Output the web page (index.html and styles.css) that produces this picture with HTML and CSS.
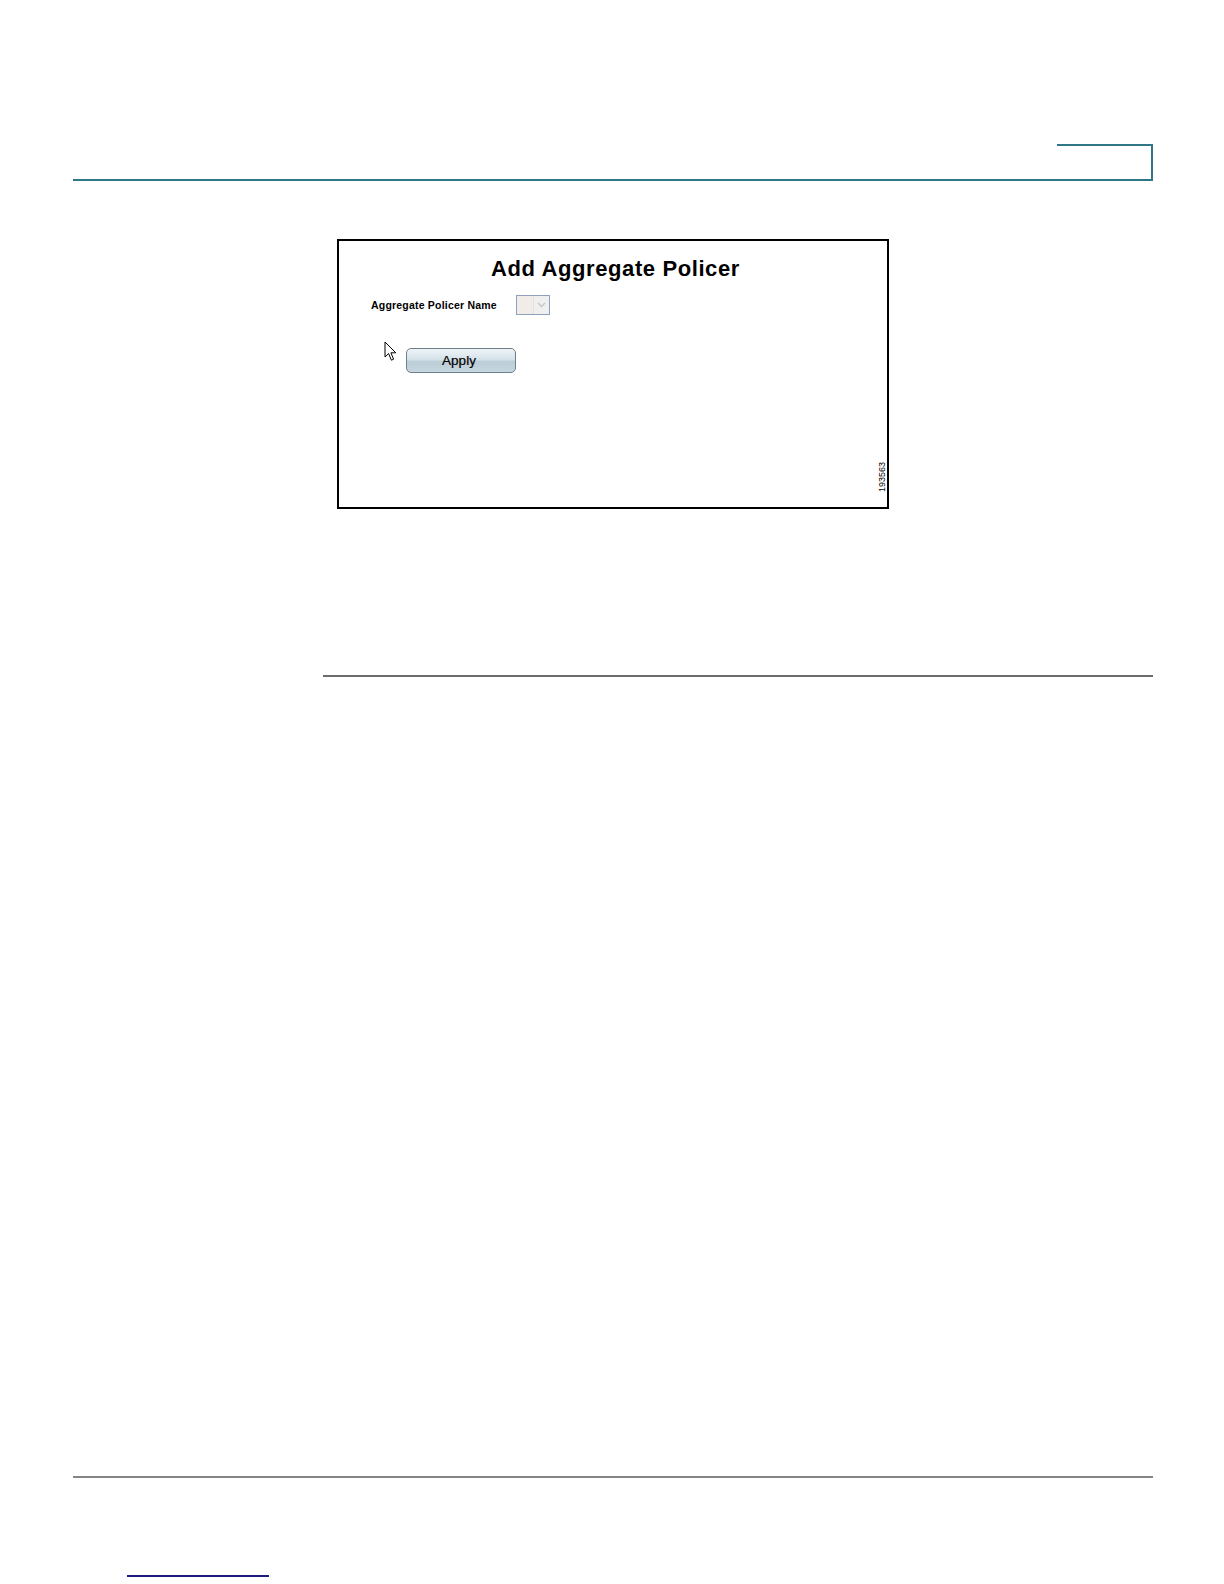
FILE: index.html
```html
<!DOCTYPE html>
<html lang="en">
<head>
<meta charset="utf-8">
<title>Add Aggregate Policer</title>
<link rel="stylesheet" href="styles.css">
</head>
<body>
<div class="page">
  <header class="header">
    <div class="tab"></div>
  </header>

  <figure class="figure">
    <h1 class="title">Add Aggregate Policer</h1>
    <div class="field-row">
      <span class="label">Aggregate Policer Name</span>
      <span class="select">
        <span class="select-value"></span>
        <span class="select-arrow">
          <svg width="9" height="6" viewBox="0 0 9 6"><path d="M1 1 L4.5 4.5 L8 1" fill="none" stroke="#c4c4c4" stroke-width="1.3"/></svg>
        </span>
      </span>
    </div>
    <div class="button-row">
      <svg class="cursor" width="13" height="21" viewBox="0 0 13 21">
        <path d="M1 1 L1 16 L4.6 12.6 L7.4 19.2 L9.6 18.2 L6.9 11.8 L11.8 11.8 Z" fill="#fff" stroke="#000" stroke-width="1" stroke-linejoin="miter"/>
      </svg>
      <button class="apply" type="button">Apply</button>
    </div>
    <span class="fig-id">193563</span>
  </figure>

  <hr class="rule">
  <hr class="footer-rule">
  <div class="link-line"></div>
</div>
</body>
</html>
```

FILE: styles.css
```css
html, body {
  margin: 0;
  padding: 0;
  background: #ffffff;
}

body {
  font-family: "Liberation Sans", Arial, sans-serif;
  color: #000;
}

.page {
  width: 1224px;
  height: 1584px;
  overflow: hidden;
}

.header {
  margin: 144px 0 0 73px;
  width: 1080px;
  display: flex;
  justify-content: flex-end;
  border-bottom: 2px solid #2f7787;
}

.tab {
  width: 94px;
  height: 33px;
  border-top: 2px solid #2f7787;
  border-right: 2px solid #2f7787;
}

.figure {
  position: relative;
  box-sizing: border-box;
  margin: 58px 0 0 337px;
  width: 552px;
  height: 270px;
  border: 2px solid #000;
  padding: 15px 0 0 0;
}

.title {
  margin: 0;
  padding-left: 5px;
  text-align: center;
  font-size: 22px;
  line-height: 26px;
  font-weight: bold;
  letter-spacing: 0.6px;
}

.field-row {
  display: flex;
  align-items: center;
  gap: 19px;
  margin-top: 13px;
  padding-left: 32px;
  height: 20px;
}

.label {
  font-size: 10.5px;
  font-weight: bold;
  letter-spacing: 0.2px;
}

.select {
  display: flex;
  box-sizing: border-box;
  width: 34px;
  height: 20px;
  border: 1px solid #8f9fbd;
  background: #fff;
}

.select-value {
  flex: 1;
  background: #f1ece8;
}

.select-arrow {
  width: 15px;
  display: flex;
  align-items: center;
  justify-content: center;
  background: #efefef;
  border-left: 1px solid #e2e2e2;
}

.button-row {
  display: flex;
  align-items: flex-start;
  margin-top: 26px;
  padding-left: 45px;
}

.cursor {
  display: block;
}

.apply {
  margin: 7px 0 0 9px;
  box-sizing: border-box;
  width: 110px;
  height: 25px;
  padding: 0;
  border: 1px solid #6f7f8a;
  border-radius: 5px;
  background: linear-gradient(to bottom, #eef4f7 0%, #d6e3ea 45%, #bccdd7 55%, #c6d6df 100%);
  font-family: "Liberation Sans", Arial, sans-serif;
  font-size: 13.5px;
  color: #000;
  text-align: center;
  line-height: 21px;
  text-indent: -4px;
  -webkit-text-stroke: 0.2px #000;
}

.fig-id {
  position: absolute;
  right: 0;
  bottom: 15px;
  writing-mode: vertical-rl;
  transform: rotate(180deg);
  font-size: 9px;
  line-height: 10px;
  font-family: "Liberation Sans", Arial, sans-serif;
}

.rule {
  margin: 166px 0 0 323px;
  width: 830px;
  height: 0;
  border: 0;
  border-top: 2px solid #6c6c6c;
}

.footer-rule {
  margin: 799px 0 0 73px;
  width: 1080px;
  height: 0;
  border: 0;
  border-top: 2px solid #858585;
}

.link-line {
  margin: 97px 0 0 127px;
  width: 142px;
  height: 2px;
  background: #1d1d7d;
}
```
